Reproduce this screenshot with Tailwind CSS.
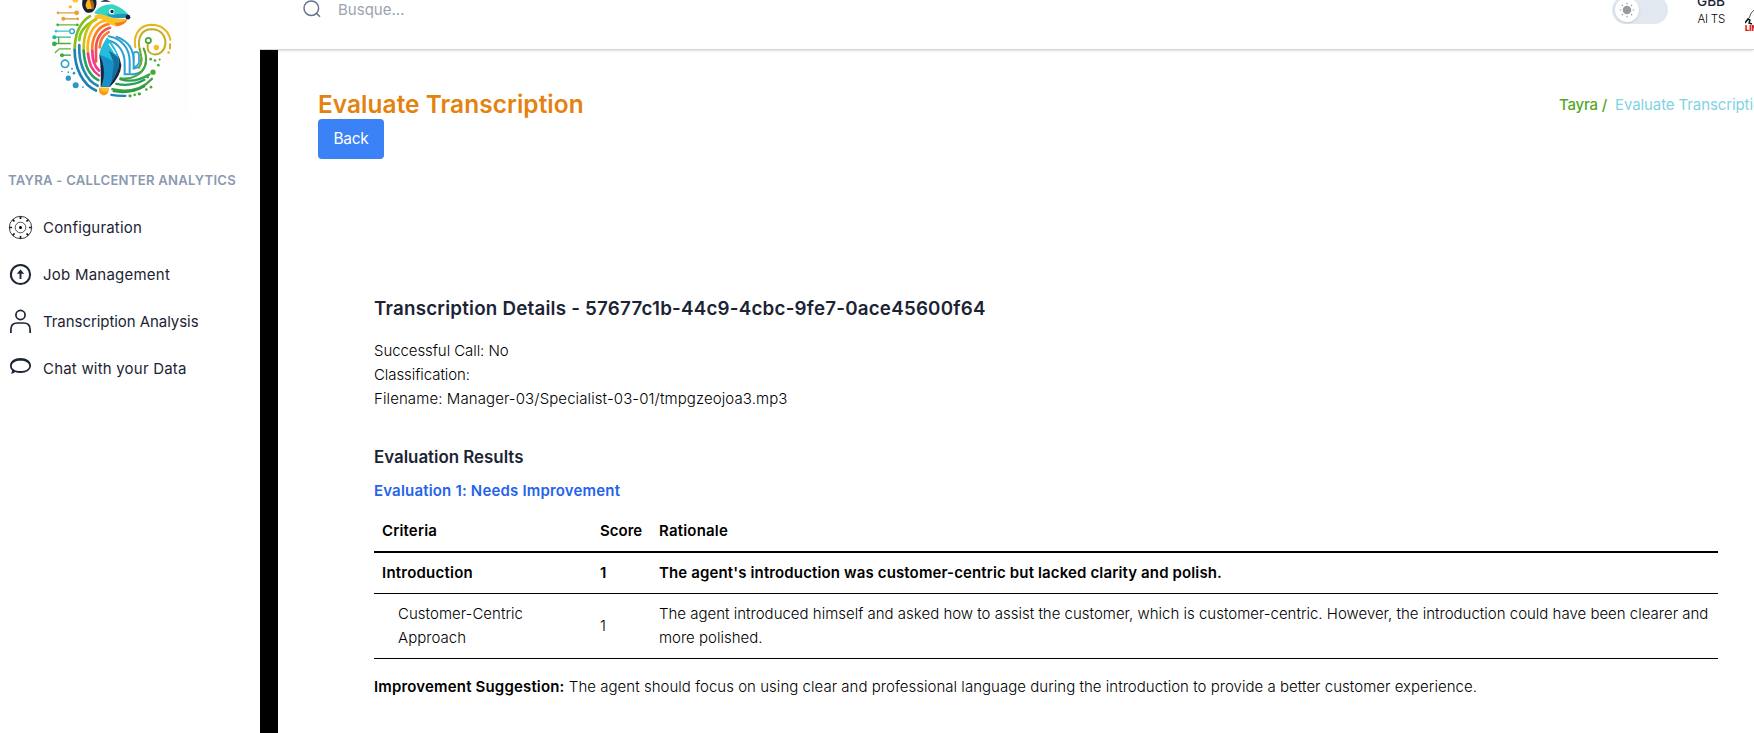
<!DOCTYPE html>
<html lang="pt">
<head>
<meta charset="utf-8">
<title>Tayra - Evaluate Transcription</title>
<script src="https://cdn.jsdelivr.net/npm/@tailwindcss/browser@4"></script>
</head>
<body class="h-[733px] w-[1754px] overflow-hidden bg-white font-['Inter',sans-serif] text-[15px] leading-6 text-black">
<div class="flex h-full">
  <aside class="relative z-20 flex w-[260px] shrink-0 flex-col bg-white">
    <div class="h-[119px] pl-10">
      <svg class="h-[119px] w-[149px] bg-[#fefefe]" viewBox="120 0 447 356" fill="none" stroke-linecap="round">
        <!-- circuit traces -->
        <g stroke-width="4">
          <path d="M174 38H230" stroke="#e0a030"/><path d="M190 56H235" stroke="#d98c2b"/>
          <path d="M173 74H230" stroke="#6cb52d"/><path d="M168 93H208" stroke="#35c4d7"/>
          <path d="M164 111H211" stroke="#30b98c"/><path d="M164 130H211M176 130V112" stroke="#4cb035"/>
          <path d="M166 157L178 146H211" stroke="#5cb52b"/><path d="M186 165H211" stroke="#2c9a3c"/>
        </g>
        <g fill="#e5a02f"><circle cx="226" cy="-2" r="9" fill="#fdc52e"/><circle cx="211" cy="20" r="5" fill="#fdb92e"/><circle cx="230" cy="38" r="7"/><circle cx="174" cy="38" r="4"/><circle cx="190" cy="56" r="6"/><circle cx="233" cy="56" r="4"/></g>
        <g fill="#35ad45"><circle cx="173" cy="74" r="4"/><circle cx="232" cy="74" r="4"/><circle cx="163" cy="111" r="6" fill="#1bbd9c"/><circle cx="163" cy="131" r="7"/><circle cx="186" cy="165" r="6"/><circle cx="168" cy="93" r="4" fill="#35c4d7"/></g>
        <circle cx="216" cy="93" r="7" stroke="#2aa6d8" stroke-width="4"/>
        <circle cx="195" cy="191" r="11" stroke="#2c9fd0" stroke-width="5"/>
        <g fill="#2a98c8"><circle cx="205" cy="234" r="8"/><circle cx="227" cy="255" r="9"/><circle cx="222" cy="219" r="4"/><circle cx="216" cy="206" r="3"/><circle cx="186" cy="214" r="2.5"/><circle cx="205" cy="216" r="2.5"/><circle cx="249" cy="261" r="2.5"/></g>
        <!-- body bands -->
        <g stroke-width="8">
          <path d="M270 48C238 68 224 105 224 150" stroke="#85bd20"/>
          <path d="M224 150C224 205 249 254 288 271" stroke="#1d7fb9"/>
          <path d="M288 58C257 73 239 96 238 120" stroke="#85c71b"/>
          <path d="M238 135C235 188 256 240 293 257" stroke="#2787b4"/>
          <path d="M303 48C267 58 249 103 251 151" stroke="#cdbf14"/>
          <path d="M251 151C253 194 266 225 295 240" stroke="#20a35b"/>
          <path d="M318 61C274 69 259 116 264 160" stroke="#ffb21b"/>
          <path d="M264 160C268 194 276 212 297 226" stroke="#ed3e87"/>
          <path d="M326 72C292 76 274 117 277 153" stroke="#ff7d22"/>
          <path d="M277 153C277 184 284 199 297 211" stroke="#ef3b91"/>
          <path d="M330 83C302 91 288 117 288 145V184" stroke="#f2514f"/>
          <path d="M326 96C308 106 300 120 299 142" stroke="#f97832"/>
        </g>
        <!-- flank -->
        <g stroke="#2aa0d2" stroke-width="6">
          <path d="M326 108C364 114 389 144 389 184V217"/>
          <path d="M328 122C356 130 374 155 374 188V222H400C423 220 437 205 438 181"/>
          <path d="M350 110C383 122 402 147 401 185V205Q422 202 424 184V174"/>
          <path d="M401 180V162Q401 154 410 155Q418 157 417 169V188Q411 198 402 202" stroke-width="5"/>
        </g>
        <!-- curled tail -->
        <g stroke-width="6">
          <path d="M406 141C399 103 419 75 454 74C486 74 507 94 511 119" stroke="#e9b21b"/>
          <path d="M419 147C411 111 426 87 455 87C483 87 498 107 496 132C494 151 480 163 464 163C450 162 439 153 444 130" stroke="#bfae1c"/>
          <path d="M419 147C425 171 428 183 417 203" stroke="#6aa92d"/>
          <path d="M431 145C444 174 441 211 408 227C393 235 376 236 361 234" stroke="#49a535"/>
          <circle cx="445" cy="121" r="8" stroke="#4ba337" stroke-width="5"/>
          <path d="M510 132V145" stroke="#e7a82a"/>
        </g>
        <circle cx="469" cy="142" r="8" fill="#fdb72b"/><circle cx="506" cy="157" r="4" fill="#f2a530"/>
        <!-- lower arcs -->
        <g stroke-width="7">
          <path d="M361 237C388 246 420 240 448 223" stroke="#2ca052"/>
          <path d="M349 251C382 258 410 252 433 239" stroke="#269d54"/>
          <path d="M456 236C429 266 388 278 337 267" stroke="#42a23c"/>
          <path d="M433 258C402 276 370 278 341 273" stroke="#2b9b43"/>
          <path d="M334 284Q355 288 376 287" stroke="#1f84b8"/>
        </g>
        <g fill="#45aa36"><circle cx="459" cy="216" r="8"/><circle cx="452" cy="177" r="4"/><circle cx="465" cy="181" r="4"/><circle cx="479" cy="178" r="3"/><circle cx="475" cy="195" r="4"/><circle cx="443" cy="231" r="4"/><circle cx="453" cy="261" r="4"/><circle cx="439" cy="268" r="4"/><circle cx="418" cy="281" r="5"/><circle cx="404" cy="284" r="4"/><circle cx="390" cy="287" r="5"/></g>
        <g fill="#35acd9"><circle cx="376" cy="124" r="2"/><circle cx="383" cy="132" r="2"/><circle cx="391" cy="138" r="2"/></g>
        <!-- leg -->
        <path d="M298 166Q304 205 302 260H330Q362 228 364 195Q359 158 322 124Z" fill="#18263a"/>
        <path d="M321 112C313 133 299 149 299 164C314 198 316 225 304 260H328C342 231 363 205 357 174C352 157 340 137 321 112Z" fill="#1690c7"/>
        <path d="M321 112C306 135 299 151 299 164L328 176L350 192Q366 160 321 112Z" fill="#25bddb"/>
        <path d="M326 150L342 190L334 245C350 220 362 204 354 171Z" fill="#146f9f"/>
        <path d="M328 132L346 160" stroke="#fff" stroke-width="4"/>
        <path d="M297 263H326Q328 285 311 286Q295 283 297 263Z" fill="#f99a17"/><path d="M298 263H327L322 274Q307 278 298 263Z" fill="#ffc021"/>
        <!-- head -->
        <path d="M282 36Q302 10 337 12Q365 20 388 43Q388 57 376 71Q350 85 327 69Q307 50 282 42Z" fill="#fff"/>
        <path d="M284 36Q302 11 338 12Q364 20 386 43Q370 56 342 55Q312 47 284 40Z" fill="#34d6c1"/>
        <path d="M318 40Q332 58 380 52Q385 46 384 42Q355 39 339 45Z" fill="#2293c2"/>
        <path d="M284 46Q300 38 316 46Q343 59 383 55Q376 76 347 78Q326 73 312 60Q298 52 284 56Z" fill="#ffc226"/>
        <path d="M344 67Q363 70 382 58Q374 77 349 78Z" fill="#f27c20"/>
        <path d="M250 -8Q240 20 258 36Q274 42 282 31Q295 14 286 -8Z" fill="#152136"/>
        <path d="M265 -3Q250 13 262 27L276 26V6Z" fill="#fdb41c"/><path d="M269 0L276 27H281Q285 10 277 0Z" fill="#a96311"/>
        <path d="M301 5Q316 -6 332 5Z" fill="#152136"/>
        <circle cx="335" cy="34" r="8" fill="#fff"/><circle cx="336" cy="34" r="5" fill="#1b2a42"/><circle cx="384" cy="51" r="7" fill="#15213a"/>
      </svg>
    </div>
    <h3 class="mt-[51px] pl-2 text-[13.1px] leading-5 font-semibold tracking-[0.26px] whitespace-nowrap text-[#8a99af]">TAYRA - CALLCENTER ANALYTICS</h3>
    <nav class="mt-[18px] flex flex-col gap-[7px] pl-2 text-[#1c2434]">
      <a class="flex h-10 items-center gap-[10px]">
        <svg class="h-[25px] w-[25px] -translate-y-px" viewBox="0 0 25 25" fill="none" stroke="#111">
          <circle cx="12.5" cy="12.5" r="11.2" stroke-width=".8"/><circle cx="12.5" cy="12.5" r="5.3" stroke-width=".7"/><circle cx="12.5" cy="12.5" r="1.5" fill="#000" stroke="none"/>
          <path d="M12.5 1.5V4M12.5 21V23.5M1.5 12.5H4M21 12.5H23.5M4.7 4.7L6.5 6.5M18.5 18.5L20.3 20.3M4.7 20.3L6.5 18.5M18.5 6.5L20.3 4.7" stroke-width="1.7"/>
        </svg>
        <span class="tracking-[0.19px]">Configuration</span>
      </a>
      <a class="flex h-10 items-center gap-[10px]">
        <svg class="h-[25px] w-[25px] -translate-y-px" viewBox="0 0 25 25" fill="none" stroke="#1c2434">
          <circle cx="12.5" cy="12.5" r="9.6" stroke-width="2"/><path d="M12.5 17V9" stroke-width="1.9"/><path d="M8.8 11.8L12.5 7.5L16.2 11.8Z" fill="#1c2434" stroke="none"/>
        </svg>
        <span class="tracking-[0.23px]">Job Management</span>
      </a>
      <a class="flex h-10 items-center gap-[10px]">
        <svg class="h-[25px] w-[25px] -translate-y-px" viewBox="0 0 25 25" fill="none" stroke="#1c2434" stroke-width="1.7">
          <circle cx="12.5" cy="6" r="4.6"/><path d="M2.9 24V20.5Q2.9 14 9.4 14H15.6Q22.1 14 22.1 20.5V24"/>
        </svg>
        <span class="tracking-[-0.06px]">Transcription Analysis</span>
      </a>
      <a class="flex h-10 items-center gap-[10px]">
        <svg class="h-[25px] w-[25px] -translate-y-px" viewBox="0 0 25 25">
          <path fill="#1c2434" fill-rule="evenodd" d="M12.5 2C18.5 2 23 5.1 23 9.6C23 14.1 18.5 17 12.5 17C10.4 17 8.5 16.7 6.9 16.1C5.8 17.2 4.6 17.8 2.8 17.8C3.8 16.7 4.1 15.5 3.9 14.3C2.6 13.1 2 11.6 2 9.6C2 5.1 6.5 2 12.5 2ZM12.5 4.7C7.5 4.7 3.8 6.7 3.8 9.9C3.8 13.1 7.5 15.1 12.5 15.1C17.5 15.1 21.2 13.1 21.2 9.9C21.2 6.7 17.5 4.7 12.5 4.7Z"/>
        </svg>
        <span class="tracking-[0.2px]">Chat with your Data</span>
      </a>
    </nav>
  </aside>

  <div class="flex min-w-0 flex-1 flex-col">
    <header class="z-10 flex h-[50px] shrink-0 border-b border-[#d3d6db] bg-white pl-[43px] shadow-sm">
      <svg class="h-[18px] w-[18px]" viewBox="0 0 18 18" fill="none" stroke="#64748b" stroke-width="1.5"><circle cx="8.3" cy="8.2" r="7.3"/><path d="M13.5 13.4L17 16.7"/></svg>
      <span class="-mt-[2px] ml-[17px] tracking-[0.02px] text-[#9ca3af]">Busque...</span>
      <div class="-mt-1 ml-auto h-7 w-14 rounded-full bg-[#e2e8f0] p-[3px]">
        <div class="flex h-6 w-6 -translate-y-px items-center justify-center rounded-full bg-white shadow">
          <svg class="h-4 w-4" viewBox="0 0 16 16" fill="#969aa1" stroke="#969aa1"><circle cx="8" cy="8" r="4.3" stroke="none"/><path stroke-width="1.2" stroke-linecap="round" d="M8 1.2V1.7M8 14.3V14.8M1.2 8H1.7M14.3 8H14.8M3.2 3.2L3.5 3.5M12.5 12.5L12.8 12.8M3.2 12.8L3.5 12.5M12.5 3.5L12.8 3.2"/></svg>
        </div>
      </div>
      <div class="-mt-[9px] ml-7 w-[29px] text-right">
        <p class="text-[13.6px] leading-5 font-medium text-[#1c2434]">GBB</p>
        <p class="text-[11.5px] leading-4 font-light tracking-[-0.2px] whitespace-nowrap text-black">AI TS</p>
      </div>
      <!-- avatar, cut off by the window edge -->
      <div class="ml-5 h-8 w-[9px] shrink-0 overflow-hidden">
        <svg class="h-8 w-8" viewBox="0 0 32 32" fill="none"><path d="M9 10Q6 12 4 18L0 23" stroke="#444" stroke-width=".9"/><path d="M0 23L3 19L5 20L4 23L7 24" stroke="#111" stroke-width="1.4"/><text x="0" y="30.5" font-family="Inter" font-size="7.5" font-weight="900" fill="#e11515">LINK</text></svg>
      </div>
    </header>

    <div class="flex min-h-0 flex-1">
      <div class="w-[18px] shrink-0 bg-black"></div>
      <main class="min-w-0 flex-1 pt-[39px] pl-10">
        <div class="flex h-[30px] items-center justify-between">
          <h2 class="text-[24.4px] leading-[30px] font-semibold tracking-[0.07px] text-[#e4820f]">Evaluate Transcription</h2>
          <ol class="mt-px flex w-[195px] gap-2 whitespace-nowrap">
            <li class="w-[49px] font-medium tracking-[-0.2px] text-[#55a61e]">Tayra /</li>
            <li class="tracking-[-0.1px] text-[#80d3e4]">Evaluate Transcription</li>
          </ol>
        </div>
        <button class="flex h-10 w-[66px] items-center justify-center rounded bg-[#3b82f6] text-[15.4px] tracking-[-0.26px] text-white">Back</button>

        <section class="mt-[136px] ml-[56px] w-[1344px] font-light">
          <h3 class="text-[18.75px] leading-7 font-semibold tracking-[0.22px] text-[#1c2434]">Transcription Details - 57677c1b-44c9-4cbc-9fe7-0ace45600f64</h3>
          <div class="mt-4">
            <p class="tracking-[-0.07px]">Successful Call: No</p>
            <p class="tracking-[-0.07px]">Classification:</p>
            <p class="tracking-[0.1px]">Filename: Manager-03/Specialist-03-01/tmpgzeojoa3.mp3</p>
          </div>
          <h4 class="mt-8 text-[16.9px] leading-7 font-semibold tracking-[-0.01px] text-[#1c2434]">Evaluation Results</h4>
          <h5 class="mt-2 font-semibold tracking-[0.18px] text-[#2563eb]">Evaluation 1: Needs Improvement</h5>
          <table class="mt-2 w-full table-fixed border-separate border-spacing-0 text-left">
            <colgroup><col class="w-[218px]"><col class="w-[59px]"><col></colgroup>
            <thead>
              <tr>
                <th class="border-b-2 border-black p-2 font-semibold tracking-[0.16px]">Criteria</th>
                <th class="border-b-2 border-black p-2 font-semibold">Score</th>
                <th class="border-b-2 border-black p-2 font-semibold tracking-[0.19px]">Rationale</th>
              </tr>
            </thead>
            <tbody>
              <tr class="font-semibold">
                <td class="border-b border-black p-2 tracking-[0.23px]">Introduction</td>
                <td class="border-b border-black p-2">1</td>
                <td class="border-b border-black p-2 tracking-[0.135px]">The agent's introduction was customer-centric but lacked clarity and polish.</td>
              </tr>
              <tr>
                <td class="border-b border-black p-2 pl-6 tracking-[0.03px]">Customer-Centric<br>Approach</td>
                <td class="border-b border-black p-2">1</td>
                <td class="border-b border-black p-2 whitespace-nowrap">The agent introduced himself and asked how to assist the customer, which is customer-centric. However, the introduction could have been clearer and<br>more polished.</td>
              </tr>
            </tbody>
          </table>
          <p class="mt-4 tracking-[0.03px]"><strong class="font-semibold tracking-[0.17px]">Improvement Suggestion:</strong> The agent should focus on using clear and professional language during the introduction to provide a better customer experience.</p>
        </section>
      </main>
    </div>
  </div>
</div>
</body>
</html>
